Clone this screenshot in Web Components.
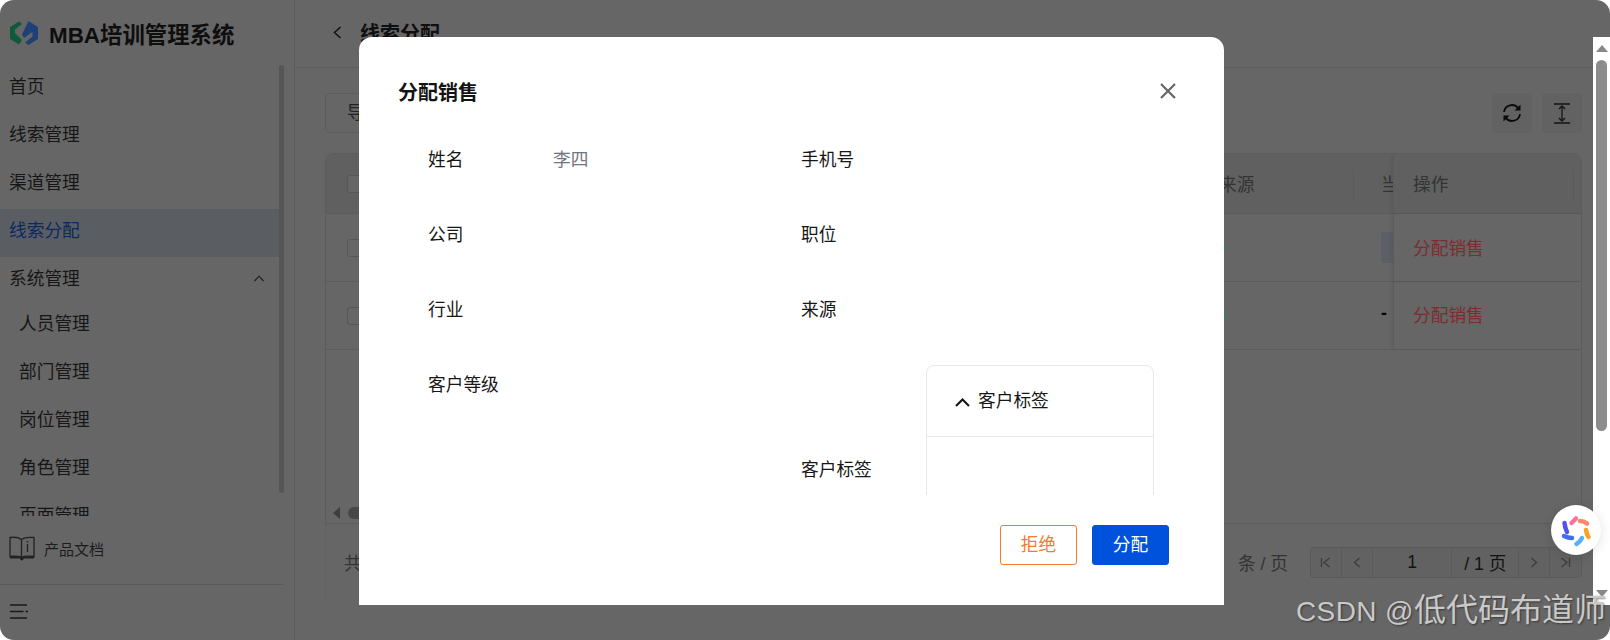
<!DOCTYPE html>
<html lang="zh"><head><meta charset="utf-8"><title>线索分配</title>
<style>
html,body{margin:0;padding:0;background:#fff;overflow:hidden}
body{font-family:"Liberation Sans","Noto Sans CJK SC",sans-serif;font-size:17.7px;color:#141414}
</style></head>
<body>
<app-shell>
  <side-nav slot="side"></side-nav>
  <lead-page slot="main"></lead-page>
  <assign-dialog slot="over"></assign-dialog>
  <assist-badge slot="over"></assist-badge>
  <water-mark slot="over"><span>CSDN @</span><span style="font-size:32px;letter-spacing:0">低代码布道师</span></water-mark>
</app-shell>
<script>
const def=(name,html)=>{customElements.define(name,class extends HTMLElement{constructor(){super();this.attachShadow({mode:'open'}).innerHTML=html;}});};

def('app-shell',`<style>
:host{display:flex;position:relative;width:1610px;height:640px;background:#666;border-radius:14px;overflow:hidden}
</style><slot name="side"></slot><slot name="main"></slot><slot name="over"></slot>`);

def('nav-item',`<style>
:host{display:block;height:48px;line-height:44px;padding-left:9px;font-size:17.7px;color:#161616;white-space:nowrap;position:relative}
:host([sub]){padding-left:19px}
:host([active]){background:#5a5e63;color:#0c2860}
::slotted(svg){position:absolute;left:254px;top:18px}
</style><slot></slot><slot name="icon"></slot>`);

def('side-nav',`<style>
:host{display:flex;flex-direction:column;flex:none;width:295px;height:640px;box-sizing:border-box;border-right:1px solid #5c5c5c}
.brand{display:flex;align-items:center;gap:11px;height:65px;padding:1px 0 0 10px;box-sizing:border-box;font-size:22.4px;font-weight:700;color:#0e0e0e;white-space:nowrap}
.wrap{display:flex;height:451px;overflow:hidden}
.list{width:279px;flex:none}
.bar{width:5px;height:428px;background:#555;border-radius:3px}
.sub{margin-top:-3px}
.doc{display:flex;align-items:center;gap:9px;height:68px;padding:0 0 3px 9px;font-size:15px;color:#1c1c1c;box-sizing:border-box}
.line{width:284px;height:1px;background:#5a5a5a}
.burger{padding:19px 0 0 10px}
svg{display:block}
</style>
<div class="brand"><svg width="28" height="24" viewBox="0 0 28 24"><path fill="#0f5a3a" d="M0 6 9 .5 12 3 5 8.500V12L12 19 9 23.500 0 18Z"/><path fill="#1f4177" d="M18.500 0 28 6V18L18.500 24 15 21.500 22.500 15.500V11L14 17 12 13.500Z"/></svg><span>MBA培训管理系统</span></div>
<div class="wrap"><div class="list">
<nav-item>首页</nav-item><nav-item>线索管理</nav-item><nav-item>渠道管理</nav-item><nav-item active>线索分配</nav-item>
<nav-item>系统管理<svg slot="icon" width="10" height="7" viewBox="0 0 10 7"><path d="M.5 6 5 1.200 9.500 6" fill="none" stroke="#1c1c1c" stroke-width="1.100"/></svg></nav-item>
<div class="sub"><nav-item sub>人员管理</nav-item><nav-item sub>部门管理</nav-item><nav-item sub>岗位管理</nav-item><nav-item sub>角色管理</nav-item><nav-item sub>页面管理</nav-item></div>
</div><div class="bar"></div></div>
<div class="doc"><svg width="26" height="25" viewBox="0 0 26 25" fill="none" stroke="#222" stroke-width="1.300"><path d="M12.500 3.500C10 1.500 5 1 1 1.500V20.500C5 20 10 20 12.500 21.500 15 20 20 20 25 20.500V1.500C20 1 15 1.500 12.500 3.500ZM12.500 3.500V21.500"/><path d="M1 21.500H25" stroke-width="2"/><circle cx="12.800" cy="22.800" r="1.800" fill="#222" stroke="none"/><path d="M18.500 8V16M18.500 5V6.400"/></svg><span>产品文档</span></div>
<div class="line"></div>
<div class="burger"><svg width="18" height="15" viewBox="0 0 18 15" stroke="#1a1a1a" stroke-width="1.400" fill="none"><path d="M0 1H17M0 7.500H13.500M15.500 7.500H18M0 14H17"/></svg></div>`);

def('tool-button',`<style>
:host{display:flex;align-items:center;justify-content:center;width:40px;height:40px;background:#626262;border-radius:4px}
::slotted(svg){display:block}
</style><slot></slot>`);

def('lead-table',`<style>
:host{display:flex;flex-direction:column;height:371px;box-sizing:border-box;border:1px solid #5c5c5c;border-radius:9px 9px 0 0;overflow:hidden;position:relative}
.r{display:flex;height:68px;box-sizing:border-box;border-bottom:1px solid #5c5c5c;align-items:center;flex:none}
.h{height:60px;background:#606060;color:#333}
.c{flex:1}
.chk{width:18px;height:18px;margin-left:21px;border:1px solid #575757;border-radius:3px;box-sizing:border-box;background:#666;flex:none}
.src{width:155px;height:100%;box-sizing:border-box;padding-left:20px;display:flex;align-items:center;flex:none;position:relative}
.h .src::after{content:"";position:absolute;right:0;top:15px;height:31px;width:1px;background:#5a5a5a}
.cur{width:39px;height:100%;flex:none;overflow:hidden;padding-left:27px;box-sizing:border-box;display:flex;align-items:center;white-space:nowrap}
.cell{padding-bottom:2px}
.op{width:188px;height:100%;flex:none;box-sizing:border-box;padding:0 0 3px 19px;display:flex;align-items:center;border-left:1px solid #5c5c5c;box-shadow:-2px 0 3px rgba(0,0,0,.06);position:relative;background:inherit}
.h .op{padding-bottom:2px}
.first .op{padding-bottom:1px}
.h .op::after{content:"";position:absolute;right:7px;top:15px;height:31px;width:1px;background:#5a5a5a}
.red{color:#802b30}
.tag{height:31px;line-height:31px;padding:0 0 0 11px;background:#5c5f66;border-radius:3px;color:#2a2f80;flex:none;width:60px;margin-bottom:1px}
.dot{width:3px;height:3px;background:#3f7a6a;margin-left:5px}
.empty{flex:1}
.hs{height:20px;display:flex;align-items:center;padding-left:7px;flex:none;gap:8px}
.arrow{width:0;height:0;border:6px solid transparent;border-left:0;border-right:7px solid #3e3e3e}
.th{width:300px;height:12px;border-radius:6px;background:#474747}
</style>
<div class="r h"><div class="chk"></div><div class="c"></div><div class="src cell"><span>来源</span></div><div class="cur cell"><span>当前状态</span></div><div class="op">操作</div></div>
<div class="r first"><div class="chk"></div><div class="c"></div><div class="src"><span class="dot"></span></div><div class="cur"><span class="tag">待分配</span></div><div class="op red">分配销售</div></div>
<div class="r"><div class="chk"></div><div class="c"></div><div class="src"><span class="dot"></span></div><div class="cur" style="color:#000;font-weight:700;padding-bottom:4px">-</div><div class="op red">分配销售</div></div>
<div class="empty"></div>
<div class="hs"><div class="arrow"></div><div class="th"></div></div>`);

def('pager-bar',`<style>
:host{display:flex;align-items:center;height:76px;border-left:1px solid #626262;padding-left:18px;color:#333}
.c{flex:1}
.size{margin-right:22px}
.box{display:flex;height:31px;width:272px;box-sizing:border-box;border:1px solid #5a5a5a;border-radius:4px;background:#626262;color:#121212}
.box>div{display:flex;align-items:center;justify-content:center;border-right:1px solid #5a5a5a;box-sizing:border-box}
.box>div:last-child{border-right:0}
.i{width:31px}
.v{width:80px}
.t{width:67px}
svg{display:block}
</style><span>共 2 条</span><div class="c"></div><span class="size">条 / 页</span>
<div class="box">
<div class="i"><svg width="11" height="11" viewBox="0 0 11 11" fill="none" stroke="#3c3c3c" stroke-width="1.300"><path d="M1.500 1V10M9.500 1 4 5.500 9.500 10"/></svg></div>
<div class="i"><svg width="8" height="11" viewBox="0 0 8 11" fill="none" stroke="#3c3c3c" stroke-width="1.300"><path d="M6.500 1 1.500 5.500 6.500 10"/></svg></div>
<div class="v">1</div><div class="t">/ 1 页</div>
<div class="i"><svg width="8" height="11" viewBox="0 0 8 11" fill="none" stroke="#3c3c3c" stroke-width="1.300"><path d="M1.500 1 6.500 5.500 1.500 10"/></svg></div>
<div class="i"><svg width="11" height="11" viewBox="0 0 11 11" fill="none" stroke="#3c3c3c" stroke-width="1.300"><path d="M1.500 1 7 5.500 1.500 10M9.500 1V10"/></svg></div>
</div>`);

def('lead-page',`<style>
:host{display:flex;flex-direction:column;flex:1;min-width:0;height:640px}
.head{display:flex;align-items:center;gap:18px;height:68px;box-sizing:border-box;border-bottom:1px solid #5c5c5c;padding:0 0 3px 38px;font-size:20px;font-weight:700;color:#0f0f0f}
.body{display:flex;flex-direction:column;padding:25px 28px 0 30px}
.bar{display:flex;align-items:center;gap:10px;height:40px;margin-bottom:20px}
.exp{height:40px;box-sizing:border-box;width:110px;border:1px solid #5c5c5c;border-radius:5px;padding-left:21px;line-height:38px;color:#222}
.c{flex:1}
svg{display:block}
</style>
<div class="head"><svg width="9" height="13" viewBox="0 0 9 13" fill="none" stroke="#101010" stroke-width="1.500"><path d="M7.500 1 1.500 6.500 7.500 12"/></svg><span>线索分配</span></div>
<div class="body">
<div class="bar"><div class="exp">导出</div><div class="c"></div>
<tool-button><svg width="20" height="20" viewBox="0 0 20 20" fill="none" stroke="#0a0a0a" stroke-width="1.800"><path d="M2 9A8 8 0 0 1 16.500 5.500M18 11A8 8 0 0 1 3.500 14.500"/><path fill="#0a0a0a" stroke="none" d="M18.500 1.500V7.500H12.500ZM1.500 18.500V12.500H7.500Z"/></svg></tool-button>
<tool-button><svg width="18" height="21" viewBox="0 0 18 21" fill="none" stroke="#151515" stroke-width="1.300"><path d="M1 1H17M1 20H17M9 3V18"/><path d="M6 6 9 3 12 6M6 15 9 18 12 15" stroke-width="1.500"/></svg></tool-button>
</div>
<lead-table></lead-table>
<pager-bar></pager-bar>
</div>`);

def('form-field',`<style>
:host{display:flex;align-items:flex-start;line-height:37px;font-size:17.7px;color:#171717;white-space:nowrap}
:host([center]){align-items:center}
.l{width:125px;flex:none}
.v{color:#707680}
</style><div class="l"><slot name="label"></slot></div><div class="v"><slot></slot></div>`);

def('collapse-card',`<style>
:host{display:block;width:228px;height:206px;margin-top:-4px;box-sizing:border-box;border:1px solid #e8e8ea;border-radius:8px;color:#171717}
.h{display:flex;align-items:center;gap:8px;height:71px;box-sizing:border-box;border-bottom:1px solid #e6e7ea;padding:0 0 0 28px}
svg{display:block;margin-top:2px}
</style><div class="h"><svg width="15" height="9" viewBox="0 0 15 9" fill="none" stroke="#111" stroke-width="2"><path d="M1 8 7.500 1.500 14 8"/></svg><span><slot></slot></span></div>`);

def('assign-dialog',`<style>
:host{position:absolute;left:0;top:37px;width:1610px;height:568px;display:flex}
.gap{width:359px;flex:none}
.m{width:865px;flex:none;background:#fff;border-radius:13px 13px 0 0;display:flex;flex-direction:column;overflow:hidden}
.t{display:flex;align-items:center;justify-content:space-between;height:104px;box-sizing:border-box;padding:14px 48px 10px 39px;font-size:20px;font-weight:700;color:#141414;flex:none}
.b{height:354px;box-sizing:border-box;padding:1px 0 0 69px;overflow:hidden;flex:none;display:grid;grid-template-columns:373px 373px;grid-auto-rows:75px}
.f{display:flex;justify-content:flex-end;gap:15px;padding:30px 55px 0 0;flex:none}
.btn{width:77px;height:40px;box-sizing:border-box;border-radius:3px;text-align:center;line-height:38px;font-size:17.7px;border:1px solid}
.no{color:#f37a30;border-color:#f37a30;background:#fff}
.ok{color:#fff;background:#0052dc;border-color:#0052dc}
.rest{flex:1}
.s{width:17px;flex:none;background:#fff;display:flex;flex-direction:column;align-items:center;position:relative}
.up{width:0;height:0;border:6.500px solid transparent;border-top:0;border-bottom:7px solid #888;margin-top:8px}
.th{width:11px;height:371px;background:#8c8c8c;border-radius:6px;margin-top:8px}
.dn{width:0;height:0;border:6.500px solid transparent;border-bottom:0;border-top:7px solid #888;margin-top:159px}
svg{display:block}
</style>
<div class="gap"></div>
<div class="m">
<div class="t"><span>分配销售</span><svg width="16" height="16" viewBox="0 0 16 16" fill="none" stroke="#666" stroke-width="2.200"><path d="M1 1 15 15M15 1 1 15"/></svg></div>
<div class="b">
<form-field><span slot="label">姓名</span>李四</form-field><form-field><span slot="label">手机号</span></form-field>
<form-field><span slot="label">公司</span></form-field><form-field><span slot="label">职位</span></form-field>
<form-field><span slot="label">行业</span></form-field><form-field><span slot="label">来源</span></form-field>
<form-field><span slot="label">客户等级</span></form-field>
<form-field center style="height:206px"><span slot="label">客户标签</span><collapse-card>客户标签</collapse-card></form-field>
</div>
<div class="f"><div class="btn no">拒绝</div><div class="btn ok">分配</div></div>
</div>
<div class="rest"></div>
<div class="s"><div class="up"></div><div class="th"></div><div class="dn"></div></div>`);

def('assist-badge',`<style>
:host{position:absolute;left:1551px;top:505px;width:50px;height:50px;border-radius:50%;background:#fff;box-shadow:0 2px 12px rgba(0,0,0,.12)}
svg{display:block}
</style><svg width="50" height="50" viewBox="0 0 50 50" fill="none" stroke-width="4.500" stroke-linecap="round"><path stroke="#fb7299" d="M20.500 18 25 13.500"/><path stroke="#f98b6b" d="M29 16Q33 16 36 18.500"/><path stroke="#f9a21f" d="M35 25Q35.500 29 37.500 32"/><path stroke="#5ab0ff" d="M25.500 39Q29 37 31 33"/><path stroke="#3f6cf5" d="M13 31Q17 33 21 33"/><path stroke="#5151f0" d="M13.500 18Q14 23 16 27"/></svg>`);

def('water-mark',`<style>
:host{position:absolute;left:1296px;top:591px;font-size:28px;line-height:38px;color:#c9c9c9;white-space:nowrap;text-shadow:1px 1px 2px rgba(0,0,0,.45);letter-spacing:.4px}
</style><slot></slot>`);
</script>
</body></html>
